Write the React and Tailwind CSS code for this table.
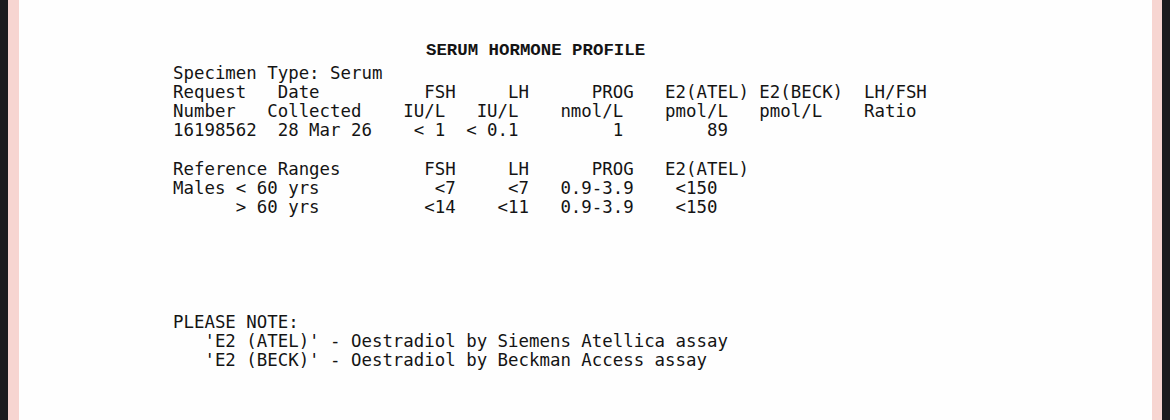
import React from "react";

function row(...parts) {
  let s = "";
  for (const [col, text] of parts) {
    while (s.length < col) s += " ";
    s += text;
  }
  return s;
}

const lines = [
  "Specimen Type: Serum",
  row([0, "Request"], [10, "Date"], [24, "FSH"], [32, "LH"], [40, "PROG"], [47, "E2(ATEL)"], [56, "E2(BECK)"], [66, "LH/FSH"]),
  row([0, "Number"], [9, "Collected"], [22, "IU/L"], [29, "IU/L"], [37, "nmol/L"], [47, "pmol/L"], [56, "pmol/L"], [66, "Ratio"]),
  row([0, "16198562"], [10, "28 Mar 26"], [23, "< 1"], [28, "< 0.1"], [42, "1"], [51, "89"]),
  "",
  row([0, "Reference Ranges"], [24, "FSH"], [32, "LH"], [40, "PROG"], [47, "E2(ATEL)"]),
  row([0, "Males < 60 yrs"], [25, "<7"], [32, "<7"], [37, "0.9-3.9"], [48, "<150"]),
  row([6, "> 60 yrs"], [24, "<14"], [31, "<11"], [37, "0.9-3.9"], [48, "<150"]),
  "",
  "",
  "",
  "",
  "",
  "PLEASE NOTE:",
  "   'E2 (ATEL)' - Oestradiol by Siemens Atellica assay",
  "   'E2 (BECK)' - Oestradiol by Beckman Access assay",
];

export default function App() {
  return (
    <div className="flex h-[420px] w-[1170px] bg-[#1c1c1e] px-[8px]">
      <div className="flex flex-1 bg-[#f7d5d1] pl-[11px] pr-[10px]">
        <div className="flex-1 bg-[#fefefe] pl-[154px] pt-[41px] text-[#141414]">
          <div
            className="ml-[253px] h-[19px] whitespace-pre text-[17.4px] font-bold leading-[19px]"
            style={{ fontFamily: '"Liberation Mono", "Courier New", monospace' }}
          >
            SERUM HORMONE PROFILE
          </div>
          <pre
            className="mt-[4px] text-[17.4px] leading-[19.15px]"
            style={{ fontFamily: '"DejaVu Sans Mono", monospace' }}
          >
            {lines.join("\n")}
          </pre>
        </div>
      </div>
    </div>
  );
}
